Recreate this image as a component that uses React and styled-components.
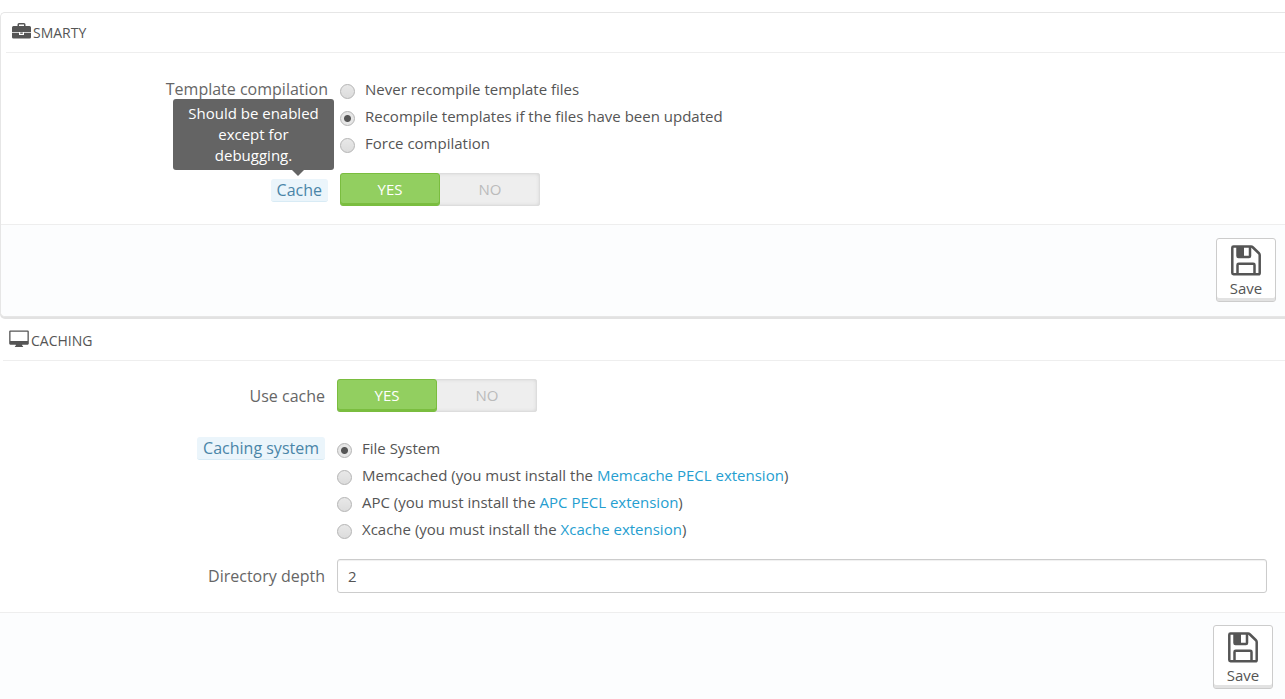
import React, { useState } from 'react'
import styled, { createGlobalStyle } from 'styled-components'


const GlobalStyle = createGlobalStyle`
    * {
        box-sizing: border-box;
    }

    body {
        margin: 0;
        background: #fff;
        color: #555;
        font-family: 'Open Sans', sans-serif;
        font-size: 15px;
        line-height: 21px;
    }
`

const Page = styled.main`
    padding-top: 12px;
    overflow-x: hidden;
`

const PanelStyled = styled.section`
    background: #fff;
    border: 1px solid ${({ $framed }) => ($framed ? '#e6e6e6' : 'transparent')};
    border-width: ${({ $framed }) => ($framed ? '1px 0 1px 1px' : '1px 0 0')};
    border-radius: 5px 0 0 5px;
    box-shadow: ${({ $framed }) => ($framed ? '0 2px 0 #e2e2e2' : 'none')};
    margin-bottom: 3px;
`

const Heading = styled.h2`
    display: flex;
    align-items: center;
    gap: 2px;
    height: 40px;
    margin: 0 0 0 ${({ $framed }) => ($framed ? '5px' : '3px')};
    padding-left: 6px;
    border-bottom: 1px solid #eee;
    color: #555;
    font-size: 14px;
    font-weight: 400;
    text-transform: uppercase;

    svg {
        margin-bottom: 3px;
    }
`

const Body = styled.div`
    display: flex;
    flex-direction: column;
    gap: 16px;
    padding: ${({ $framed }) => ($framed ? '23px 18px 18px 14px' : '18px 18px 19px 11px')};
`

const Row = styled.div`
    display: grid;
    grid-template-columns: 25% 1fr;
    column-gap: 12px;
    align-items: ${({ $top }) => ($top ? 'start' : 'center')};
    padding-top: ${({ $spaced }) => ($spaced ? '7px' : '0')};
`

const LabelCell = styled.div`
    position: relative;
    display: flex;
    justify-content: flex-end;
    padding-top: ${({ $top }) => ($top ? '2px' : '0')};
    color: #666;
    font-size: 16px;
    line-height: 22px;
`

const Hint = styled.span`
    margin-top: 2px;
    padding: 0 6px;
    border-bottom: 1px solid #d8ebf5;
    border-radius: 3px;
    background: #ebf5fb;
    color: #4a85a8;
`

const Tooltip = styled.span`
    position: absolute;
    right: -6px;
    bottom: 32px;
    width: 161px;
    padding: 4px 10px;
    border-radius: 3px;
    background: #646464;
    color: #fff;
    font-size: 15px;
    font-weight: 500;
    line-height: 21px;
    text-align: center;

    &::after {
        content: '';
        position: absolute;
        top: 100%;
        right: 30px;
        border: 6px solid transparent;
        border-top-color: #646464;
        border-bottom: 0;
    }
`

const Choice = styled.div`
    display: flex;
    align-items: center;
    height: 27px;

    label {
        padding-bottom: 1px;
    }
`

const Radio = styled.input`
    appearance: none;
    width: 15px;
    height: 15px;
    margin: 3px 10px 0 0;
    border: 1px solid #b4b4b4;
    border-radius: 50%;
    background: linear-gradient(#e8e8e8, #dcdcdc);

    &:checked {
        background: radial-gradient(circle, #555 3px, #e6e6e6 4px);
    }
`

const Link = styled.a`
    color: #259ed0;
    text-decoration: none;
`

const SwitchStyled = styled.div`
    display: flex;
    width: 200px;
    height: 33px;
    border-radius: 3px;
    background: #eee;
    box-shadow: inset 0 0 0 1px #ddd, inset 0 0 4px #ccc;
`

const SwitchOption = styled.button`
    flex: 1;
    padding: 0;
    border: 1px solid ${({ $on }) => ($on ? '#7abd3f' : 'transparent')};
    border-radius: 3px;
    background: ${({ $on }) => ($on ? '#92cf60' : 'transparent')};
    box-shadow: ${({ $on }) => ($on ? 'inset 0 -2px 0 #7abd3f' : 'none')};
    color: ${({ $on }) => ($on ? '#fff' : '#bbb')};
    font: inherit;
    text-transform: uppercase;
    cursor: pointer;
`

const TextInput = styled.input`
    width: 100%;
    height: 34px;
    padding: 0 10px;
    border: 1px solid #ccc;
    border-radius: 3px;
    background: #fff;
    box-shadow: inset 0 1px 1px #f0f0f0;
    color: #555;
    font: inherit;
`

const Footer = styled.footer`
    display: flex;
    justify-content: flex-end;
    height: ${({ $framed }) => ($framed ? '92px' : '94px')};
    padding: ${({ $framed }) => ($framed ? '13px 9px' : '12px 12px')};
    border-top: 1px solid #eee;
    border-radius: 0 0 0 5px;
    background: #fcfdfe;
`

const SaveButton = styled.button`
    display: flex;
    flex-direction: column;
    align-items: center;
    gap: 2px;
    width: 60px;
    height: 64px;
    padding: 6px 0 0;
    border: 1px solid #ccc;
    border-radius: 3px;
    background: #fff;
    box-shadow: inset 0 -3px 0 #e2e2e2;
    color: #555;
    font: inherit;
    cursor: pointer;
`


const BriefcaseIcon = () => (
    <svg width='19' height='16' viewBox='0 0 19 16' fill='#555' aria-hidden='true'>
        <path d='M5.500 3V1.500Q5.500 0 7 0h5q1.500 0 1.500 1.500V3h4Q19 3 19 4.500V9H0V4.500Q0 3 1.500 3zM7 3h5V1.400H7z' fillRule='evenodd' />
        <path d='M0 9.800h7V12h5V9.800h7v4.400q0 1.300-1.500 1.300h-16Q0 15.500 0 14.200z' />
        <path d='M8.200 9.500h2.600v1.300H8.200z' />
    </svg>
)

const DesktopIcon = () => (
    <svg width='20' height='18' viewBox='0 0 20 18' fill='#555' aria-hidden='true'>
        <path d='M1.300 .5h17.400q1.100 0 1.100 1.100v12q0 1.100-1.100 1.100h-5.500v1.100q1 .3 1 1.200H5.800q0-.9 1-1.200v-1.100H1.300Q.2 14.700 .2 13.600v-12Q.2 .5 1.300 .5zM1.500 1.800v9.300h17V1.800z' fillRule='evenodd' />
    </svg>
)

const SaveIcon = () => (
    <svg width='30' height='31' viewBox='0 0 30 31' fill='none' stroke='#555' strokeWidth='2.500' strokeLinejoin='round' aria-hidden='true'>
        <path d='M2.500 1.500h17.500q1 0 2 1l5.700 5.500q1 1 1 2v18q0 1.300-1.300 1.300H2.500q-1.200 0-1.200-1.200V2.700q0-1.200 1.200-1.200z' />
        <path d='M6.500 2v9q0 1 1 1h10.500q1 0 1-1V2M6.500 29V20q0-1.200 1.200-1.200h14.600q1.200 0 1.200 1.200v9' />
        <path d='M6.500 2H13v9.500H6.500z' fill='#555' stroke='none' />
    </svg>
)


const Panel = ({ title, icon, framed, children }) => (
    <PanelStyled $framed={framed}>
        <Heading $framed={framed}>
            {icon}
            {title}
        </Heading>
        <Body $framed={framed}>{children}</Body>
        <Footer $framed={framed}>
            <SaveButton type='button'>
                <SaveIcon />
                Save
            </SaveButton>
        </Footer>
    </PanelStyled>
)

const RadioGroup = ({ name, labelledBy, options, initial }) => {
    const [selected, setSelected] = useState(initial)

    return (
        <div role='radiogroup' aria-labelledby={labelledBy}>
            {options.map(({ value, text, link }) => (
                <Choice key={value}>
                    <Radio
                        type='radio'
                        id={`${name}-${value}`}
                        name={name}
                        checked={selected === value}
                        onChange={() => setSelected(value)}
                    />
                    <label htmlFor={`${name}-${value}`}>
                        {text}
                        {link && <React.Fragment> (you must install the <Link href='#'>{link}</Link>)</React.Fragment>}
                    </label>
                </Choice>
            ))}
        </div>
    )
}

const Switch = ({ labelledBy }) => {
    const [on, setOn] = useState(true)

    return (
        <SwitchStyled role='group' aria-labelledby={labelledBy}>
            <SwitchOption type='button' $on={on} aria-pressed={on} onClick={() => setOn(true)}>Yes</SwitchOption>
            <SwitchOption type='button' $on={!on} aria-pressed={!on} onClick={() => setOn(false)}>No</SwitchOption>
        </SwitchStyled>
    )
}


const compilation = [
    { value: 'never', text: 'Never recompile template files' },
    { value: 'updated', text: 'Recompile templates if the files have been updated' },
    { value: 'force', text: 'Force compilation' },
]

const systems = [
    { value: 'fs', text: 'File System' },
    { value: 'memcached', text: 'Memcached', link: 'Memcache PECL extension' },
    { value: 'apc', text: 'APC', link: 'APC PECL extension' },
    { value: 'xcache', text: 'Xcache', link: 'Xcache extension' },
]


const App = () => {
    const [depth, setDepth] = useState('2')

    return (
        <Page>
            <GlobalStyle />
            <Panel title='Smarty' icon={<BriefcaseIcon />} framed>
                <Row $top>
                    <LabelCell $top><span id='compilation'>Template compilation</span></LabelCell>
                    <RadioGroup name='compile' labelledBy='compilation' options={compilation} initial='updated' />
                </Row>
                <Row>
                    <LabelCell>
                        <Hint id='cache' aria-describedby='cache-tip'>Cache</Hint>
                        <Tooltip id='cache-tip' role='tooltip'>Should be enabled except for debugging.</Tooltip>
                    </LabelCell>
                    <Switch labelledBy='cache' />
                </Row>
            </Panel>

            <Panel title='Caching' icon={<DesktopIcon />}>
                <Row>
                    <LabelCell><span id='use-cache'>Use cache</span></LabelCell>
                    <Switch labelledBy='use-cache' />
                </Row>
                <Row $top $spaced>
                    <LabelCell><Hint id='system'>Caching system</Hint></LabelCell>
                    <RadioGroup name='system' labelledBy='system' options={systems} initial='fs' />
                </Row>
                <Row>
                    <LabelCell><label htmlFor='depth'>Directory depth</label></LabelCell>
                    <TextInput id='depth' type='text' value={depth} onChange={(ev) => setDepth(ev.target.value)} />
                </Row>
            </Panel>
        </Page>
    )
}


export default App
